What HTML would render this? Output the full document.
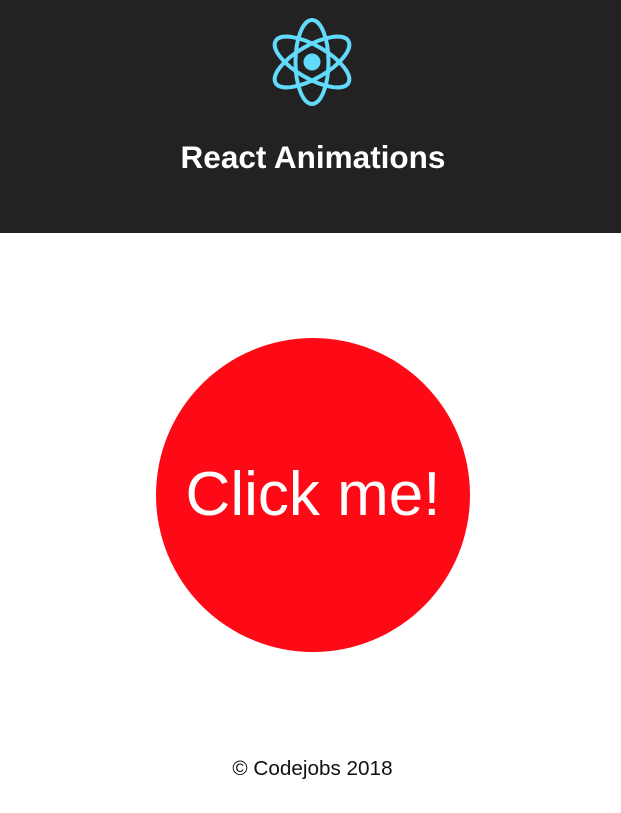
<!DOCTYPE html>
<html><head><style>
body{margin:0;width:621px;height:813px;background:#fff;font-family:"Liberation Sans",sans-serif;overflow:hidden;position:relative}
header{position:absolute;left:0;top:0;width:621px;height:233px;background:#222}
svg{position:absolute;left:266px;top:16px}
h1{position:absolute;top:139px;left:0;width:626px;text-align:center;margin:0;color:#fff;font-size:31.5px;font-weight:bold}
.c{position:absolute;left:156px;top:338px;width:314px;height:314px;border-radius:50%;background:#fe0a16;color:#fff;font-size:62px;line-height:314px;text-align:center}
.f{position:absolute;top:757px;left:0;width:625px;text-align:center;font-size:20.7px;color:#111}
</style></head><body>
<header>
<svg width="92" height="92" viewBox="-46 -46 92 92">
<g fill="none" stroke="#61dafb" stroke-width="4">
<ellipse rx="42" ry="16.5" transform="rotate(30)"/>
<ellipse rx="42" ry="16.5" transform="rotate(90)"/>
<ellipse rx="42" ry="16.5" transform="rotate(150)"/>
</g>
<circle r="8.5" fill="#61dafb"/>
</svg>
<h1>React Animations</h1>
</header>
<div class="c">Click me!</div>
<div class="f">© Codejobs 2018</div>
</body></html>
